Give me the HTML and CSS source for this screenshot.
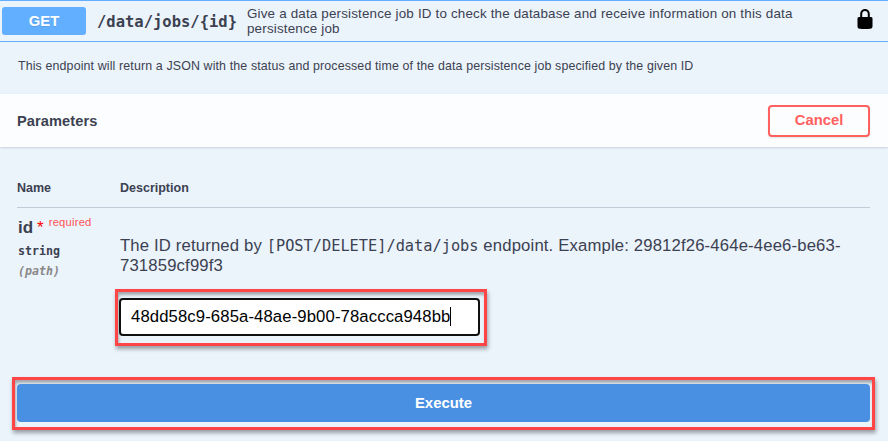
FILE: index.html
```html
<!DOCTYPE html>
<html lang="en">
<head>
<meta charset="utf-8">
<title>GET /data/jobs/{id}</title>
<link rel="stylesheet" href="styles.css">
</head>
<body>
<main class="opblock">
  <header class="summary">
    <span class="method">GET</span>
    <span class="path">/data/jobs/{id}</span>
    <p class="summary-text">Give a data persistence job ID to check the database and receive information on this data<br>persistence job</p>
    <svg class="lock" viewBox="0 0 16 20" width="16" height="20" aria-label="Authorization"><path fill="#000" fill-rule="evenodd" d="M14 8h-1.200V5.200C12.800 2.100 10.800 0 8 0S3.200 2.100 3.200 5.200V8H2C1 8 .5 8.800.5 9.800v7.700C.5 18.800 1.300 19.500 2.500 19.700c2 .3 9 .3 11 0 1.200-.2 2-.9 2-2.200V9.800C15.500 8.800 15 8 14 8zM10.800 8H5.200V5.200C5.200 3.200 6.300 2 8 2s2.800 1.200 2.800 3.200V8z"/></svg>
  </header>
  <p class="description">This endpoint will return a JSON with the status and processed time of the data persistence job specified by the given ID</p>
  <section class="section-header">
    <h2>Parameters</h2>
    <button class="cancel">Cancel</button>
  </section>
  <section class="parameters">
    <div class="row head"><span>Name</span><span>Description</span></div>
    <div class="row">
      <div class="param">
        <div class="name">id <span class="star">*</span><span class="required">required</span></div>
        <div class="type">string</div>
        <div class="in">(path)</div>
      </div>
      <div class="detail">
        <p class="detail-text">The ID returned by <code>[POST/DELETE]/data/jobs</code> endpoint. Example: 29812f26-464e-4ee6-be63-<br>731859cf99f3</p>
        <div class="highlight field"><div class="input"><span class="value">48dd58c9-685a-48ae-9b00-78accca948bb</span></div></div>
      </div>
    </div>
  </section>
  <div class="highlight action"><button class="execute">Execute</button></div>
</main>
</body>
</html>
```
FILE: styles.css
```css
* { box-sizing: border-box; }
body { margin: 0; background: #ebf3fb; color: #3b4151; font-family: "Liberation Sans", Arial, sans-serif; overflow: hidden; }
p, h2 { margin: 0; }
.opblock { width: 888px; height: 441px; border-top: 1px solid #61affe; }
.summary { display: flex; align-items: center; height: 41px; padding: 0 15px 0 2px; border-bottom: 1px solid #61affe; }
.method { width: 84px; height: 28px; border-radius: 3px; background: #61affe; color: #fff; font-size: 14.8px; font-weight: 700; line-height: 28px; text-align: center; text-shadow: 0 1px 0 rgba(0,0,0,.1); }
.path { width: 150px; margin-left: 11px; padding-top: 2px; font: 700 15.5px/20px "DejaVu Sans Mono", monospace; white-space: nowrap; }
.summary-text { flex: 1; font-size: 13.4px; line-height: 15px; letter-spacing: .175px; white-space: nowrap; }
.lock { margin-top: -4px; }
.description { height: 52px; padding: 16px 18px 0; font-size: 12.4px; line-height: 16px; letter-spacing: .135px; white-space: nowrap; }
.section-header { display: flex; align-items: center; justify-content: space-between; height: 53px; padding: 0 18px 0 17px; background: #fcfdfe; box-shadow: 0 1px 2px rgba(0,0,0,.15); }
.section-header h2 { font-size: 14.6px; letter-spacing: .1px; }
.cancel { width: 102px; height: 32px; border: 2px solid #ff6060; border-radius: 4px; background: transparent; color: #ff6060; font: 700 14.8px/26px "Liberation Sans", sans-serif; padding: 0 0 2px; box-shadow: 0 1px 2px rgba(0,0,0,.1); }
.parameters { height: 230px; padding: 33px 18px 0 17px; }
.row { display: grid; grid-template-columns: 103px 1fr; }
.head { height: 28px; border-bottom: 1px solid #c3cad8; font-size: 12.5px; font-weight: 700; line-height: 17px; }
.param { padding: 10px 0 0 1px; }
.name { display: flex; font-size: 17px; font-weight: 700; line-height: 20px; }
.star { margin-left: 4px; color: #f00; font-size: 17px; font-weight: 400; line-height: 20px; }
.required { margin: -6px 0 0 5px; color: #ff5353; font-size: 11.2px; font-weight: 400; letter-spacing: .22px; }
.type, .in { font: 700 11.6px/20px "DejaVu Sans Mono", monospace; }
.type { margin-top: 3px; }
.in { color: #888; font-style: italic; }
.detail { padding-top: 28px; }
.detail-text { height: 53px; font-size: 16.7px; line-height: 20px; letter-spacing: .155px; white-space: nowrap; }
code { font: 15.3px/16px "DejaVu Sans Mono", monospace; letter-spacing: 0; }
.highlight { border: 3px solid #ff4545; box-shadow: 1px 3px 4px rgba(0,0,0,.35), inset 1px 3px 3px rgba(0,0,0,.3); }
.field { width: 372px; height: 57px; margin-left: -5px; padding: 6px 4px 0 1px; }
.input { display: flex; align-items: center; width: 361px; height: 38px; padding: 0 0 2px 10px; border: 2px solid #101010; border-radius: 4px; background: #fff; color: #000; font-size: 16.7px; letter-spacing: .11px; }
.value { border-right: 1px solid #000; line-height: 19px; }
.action { width: 863px; height: 53px; margin-left: 12px; padding: 4px 2px 0; }
.execute { display: block; width: 853px; height: 38px; padding: 0 0 1px; border: 0; border-radius: 4px; background: #4990e2; color: #fff; font: 700 14.9px "Liberation Sans", sans-serif; }
```
